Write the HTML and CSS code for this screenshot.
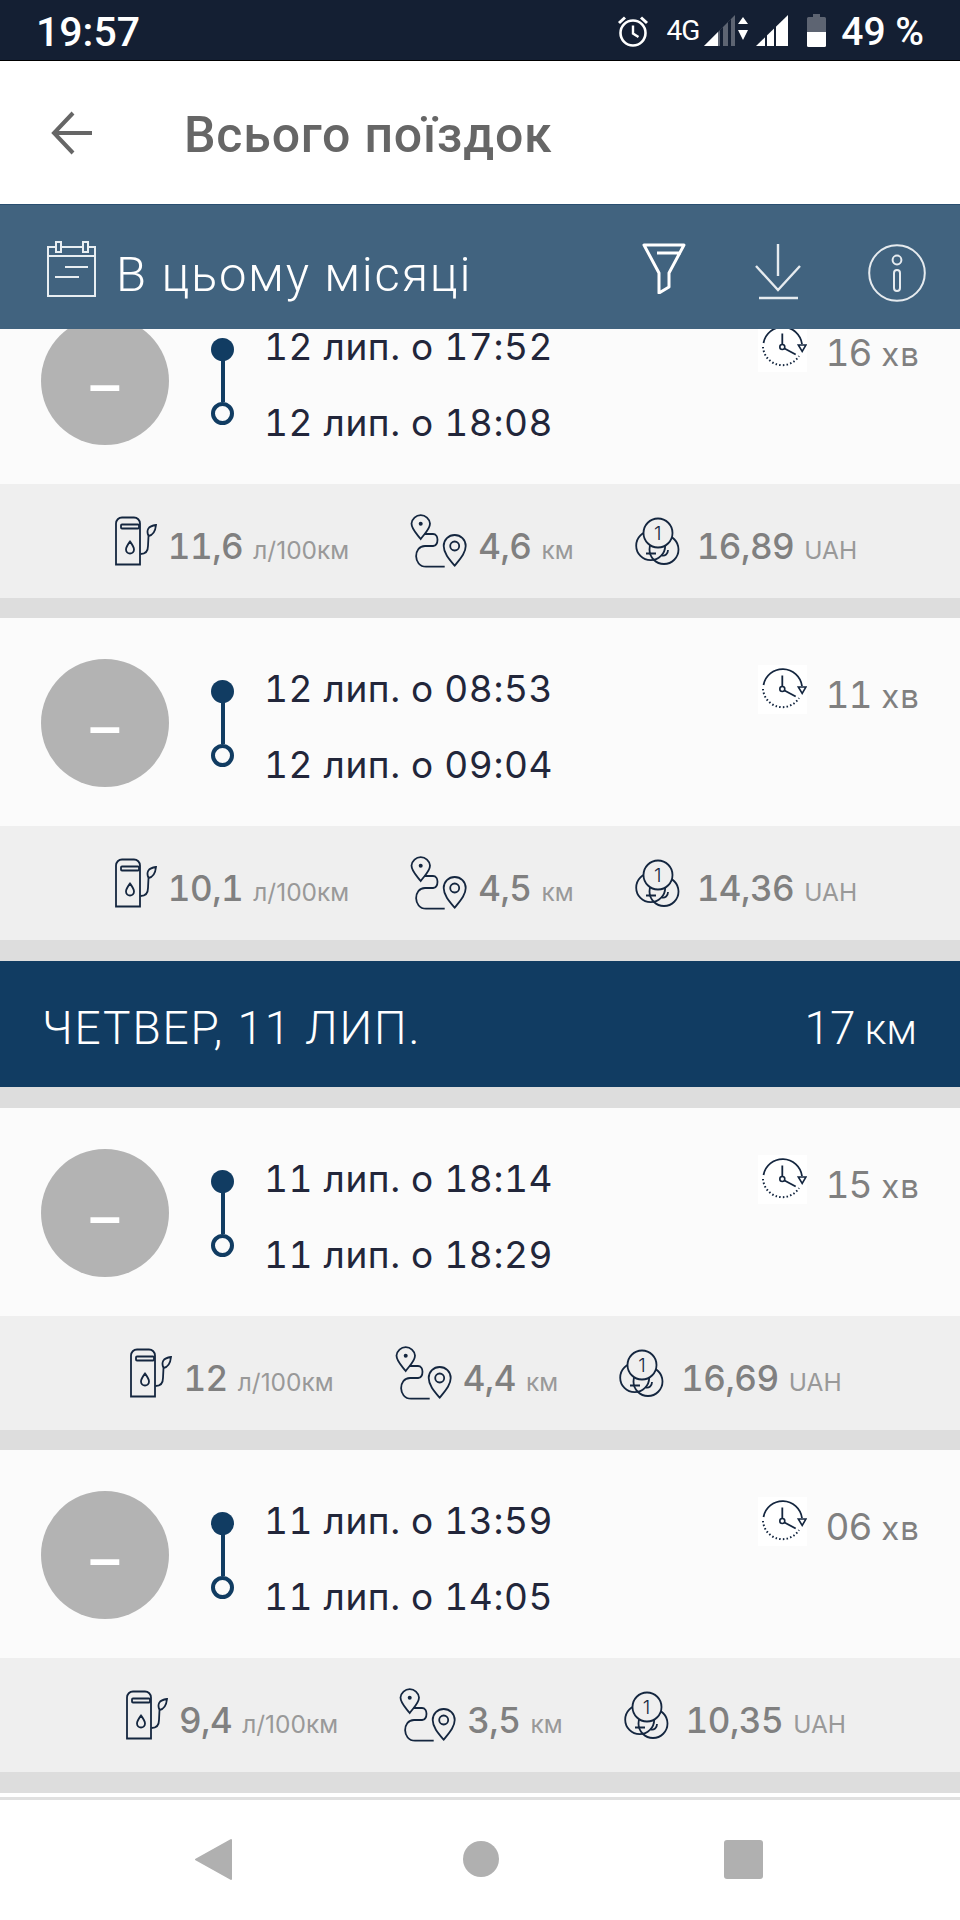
FILE: index.html
```html
<!DOCTYPE html>
<html>
<head>
    <meta charset="utf-8">
    <title>Всього поїздок</title>
    <link rel="stylesheet" href="styles.css">
</head>
<body>
    <svg class="defs" width="0" height="0">
        <symbol id="ico-clock" viewBox="0 0 49 49">
            <rect width="49" height="49" fill="#fff"/>
            <path d="M5.5 20A19.5 19.5 0 0 1 44 21" fill="none" stroke="#14263f" stroke-width="1.8"/>
            <path d="M40.3 22H48L44.2 28.5Z" fill="none" stroke="#14263f" stroke-width="1.6"/>
            <path d="M5 24A19.5 19.5 0 0 0 41 33" fill="none" stroke="#14263f" stroke-width="2" stroke-dasharray="1.5 2.2"/>
            <path d="M24.3 10.5V21.5M26.5 25.5L37.7 31.5" fill="none" stroke="#14263f" stroke-width="1.8"/>
            <circle cx="24.3" cy="24" r="2.5" fill="none" stroke="#14263f" stroke-width="1.6"/>
        </symbol>
        <symbol id="ico-pump" viewBox="0 0 42 50">
            <path d="M7 1.5H19A6 6 0 0 1 25 7.5V48.5H1V7.5A6 6 0 0 1 7 1.5Z" fill="none" stroke="#14263f" stroke-width="1.8"/>
            <rect x="6" y="8.5" width="18" height="4" rx="1" fill="none" stroke="#14263f" stroke-width="1.8"/>
            <path d="M15 25.5C12.5 29 11 31 11 33.5A4 4 0 0 0 19 33.5C19 31 17.5 29 15 25.5Z" fill="none" stroke="#14263f" stroke-width="1.8"/>
            <path d="M25.5 38C30 38 33 36 33 30L33.5 20C31 14 33 10 41 9C40.5 14 39 19 33.5 20" fill="none" stroke="#14263f" stroke-width="1.8"/>
        </symbol>
        <symbol id="ico-route" viewBox="0 0 57 56">
            <path d="M10.7 26C6 20 1.5 16 1.5 10.5A9.3 9.3 0 0 1 20 10.5C20 16 15 20 10.7 26Z" fill="none" stroke="#14263f" stroke-width="1.8"/>
            <circle cx="10.7" cy="10.7" r="2" fill="#14263f"/>
            <path d="M44.7 52.7C39 46 33.7 40 33.7 33A11 11 0 0 1 55.7 33C55.7 40 50 46 44.7 52.7Z" fill="none" stroke="#14263f" stroke-width="1.8"/>
            <circle cx="44.7" cy="33" r="4.5" fill="none" stroke="#14263f" stroke-width="1.8"/>
            <path d="M14.7 21H23C29 21 29 32 23 33H15C3 33 3 53.7 16 53.7H34.7" fill="none" stroke="#14263f" stroke-width="1.8"/>
        </symbol>
        <symbol id="ico-coin-back" viewBox="0 0 45 48">
            <circle cx="15.7" cy="28.7" r="14.5" fill="none" stroke="#14263f" stroke-width="1.8"/>
            <circle cx="29" cy="32.5" r="14.5" fill="none" stroke="#14263f" stroke-width="1.8"/>
            <path d="M11 36.5H21M27 38.5C30 39 33 37 33 33" fill="none" stroke="#14263f" stroke-width="1.8"/>
            <circle cx="23" cy="16" r="14.5" fill="#efefef" stroke="#14263f" stroke-width="1.8"/>
        </symbol>
    </svg>

    <div class="phone">
        <div class="status">
            <span class="clock">19:57</span>
            <div class="status-right">
                <svg class="alarm" width="32" height="32" viewBox="0 0 32 32">
                    <circle cx="16" cy="18" r="12.5" fill="none" stroke="#fff" stroke-width="2.6"/>
                    <path d="M16 10.5V18.5L21.5 22" fill="none" stroke="#fff" stroke-width="2.4"/>
                    <path d="M2 8L8 2.5M30 8L24 2.5" fill="none" stroke="#fff" stroke-width="3"/>
                </svg>
                <span class="net">4G</span>
                <svg class="signal" width="44" height="31" viewBox="0 0 44 31">
                    <path d="M0 31L31 0V31Z" fill="#5d6472"/>
                    <path d="M0 31L14 17V31Z" fill="#fff"/>
                    <path d="M16 31V15L19 12V31ZM24 31V7L27 4V31Z" fill="#141f33"/>
                    <path d="M39 4L44 11H34ZM39 27L34 17H44Z" fill="#fff" transform="translate(0 -2)"/>
                </svg>
                <svg class="signal2" width="32" height="31" viewBox="0 0 32 31">
                    <path d="M0 31L32 0V31Z" fill="#fff"/>
                    <path d="M9 31V20L11 18V31ZM18 31V12L20 10V31Z" fill="#141f33"/>
                </svg>
                <svg class="battery" width="19" height="33" viewBox="0 0 19 33">
                    <path d="M6 0H13V3H17.5A1.5 1.5 0 0 1 19 4.5V18H0V4.5A1.5 1.5 0 0 1 1.5 3H6Z" fill="#5d6472"/>
                    <path d="M0 18H19V31.5A1.5 1.5 0 0 1 17.5 33H1.5A1.5 1.5 0 0 1 0 31.5Z" fill="#fff"/>
                </svg>
                <span class="percent">49 %</span>
            </div>
        </div>

        <div class="topbar">
            <svg class="back" width="42" height="44" viewBox="0 0 42 44">
                <path d="M22 2L3 22L22 42M3 22H41" fill="none" stroke="#666" stroke-width="4"/>
            </svg>
            <span class="page-title">Всього поїздок</span>
        </div>

        <div class="period">
            <svg class="calendar" width="50" height="56" viewBox="0 0 50 56">
                <rect x="1" y="6" width="47" height="49" fill="none" stroke="#e8eef2" stroke-width="2"/>
                <path d="M1 15H48M18 26H41M8 36H32" fill="none" stroke="#e8eef2" stroke-width="2"/>
                <rect x="9" y="1" width="5" height="10" fill="#41637f" stroke="#e8eef2" stroke-width="2"/>
                <rect x="36" y="1" width="5" height="10" fill="#41637f" stroke="#e8eef2" stroke-width="2"/>
            </svg>
            <span class="period-label">В цьому місяці</span>
            <div class="period-tools">
                <svg width="44" height="51" viewBox="0 0 44 51">
                    <path d="M2 2H42L27 30V44L17 50V30ZM15 10H39" fill="none" stroke="#fff" stroke-width="3" stroke-linejoin="round"/>
                </svg>
                <svg class="tool-down" width="46" height="57" viewBox="0 0 46 57">
                    <path d="M23 1V33M1 23L23 47L45 23M4 55H43" fill="none" stroke="#e6ebef" stroke-width="2.4"/>
                </svg>
                <svg class="tool-info" width="58" height="58" viewBox="0 0 58 58">
                    <circle cx="29" cy="29" r="27.8" fill="none" stroke="#e6ebef" stroke-width="2"/>
                    <circle cx="29" cy="16" r="4.4" fill="none" stroke="#e6ebef" stroke-width="2"/>
                    <rect x="26" y="26" width="6" height="21" rx="3" fill="none" stroke="#e6ebef" stroke-width="2"/>
                </svg>
            </div>
        </div>

        <div class="trips">
            <div class="trips-inner">
                <div class="trip">
                    <div class="trip-main">
                        <div class="score">–</div>
                        <div class="route"><i class="dot"></i><i class="stem"></i><i class="ring"></i></div>
                        <div class="times"><div>12 лип. о 17:52</div><div>12 лип. о 18:08</div></div>
                        <div class="duration"><svg width="49" height="49"><use href="#ico-clock"/></svg><span>16 <small>хв</small></span></div>
                    </div>
                    <div class="stats">
                        <div class="stat"><svg class="pump" width="42" height="50"><use href="#ico-pump"/></svg><b>11,6</b><small>л/100км</small></div>
                        <div class="stat"><svg class="way" width="57" height="56"><use href="#ico-route"/></svg><b>4,6</b><small>км</small></div>
                        <div class="stat"><div class="coins"><svg width="45" height="48"><use href="#ico-coin-back"/></svg><span class="coin-num">1</span></div><b>16,89</b><small>UAH</small></div>
                    </div>
                </div>

                <div class="trip">
                    <div class="trip-main">
                        <div class="score">–</div>
                        <div class="route"><i class="dot"></i><i class="stem"></i><i class="ring"></i></div>
                        <div class="times"><div>12 лип. о 08:53</div><div>12 лип. о 09:04</div></div>
                        <div class="duration"><svg width="49" height="49"><use href="#ico-clock"/></svg><span>11 <small>хв</small></span></div>
                    </div>
                    <div class="stats">
                        <div class="stat"><svg class="pump" width="42" height="50"><use href="#ico-pump"/></svg><b>10,1</b><small>л/100км</small></div>
                        <div class="stat"><svg class="way" width="57" height="56"><use href="#ico-route"/></svg><b>4,5</b><small>км</small></div>
                        <div class="stat"><div class="coins"><svg width="45" height="48"><use href="#ico-coin-back"/></svg><span class="coin-num">1</span></div><b>14,36</b><small>UAH</small></div>
                    </div>
                </div>

                <div class="day">
                    <span class="day-name">ЧЕТВЕР, 11 ЛИП.</span>
                    <span class="day-dist">17<small>км</small></span>
                </div>

                <div class="trip">
                    <div class="trip-main">
                        <div class="score">–</div>
                        <div class="route"><i class="dot"></i><i class="stem"></i><i class="ring"></i></div>
                        <div class="times"><div>11 лип. о 18:14</div><div>11 лип. о 18:29</div></div>
                        <div class="duration"><svg width="49" height="49"><use href="#ico-clock"/></svg><span>15 <small>хв</small></span></div>
                    </div>
                    <div class="stats">
                        <div class="stat"><svg class="pump" width="42" height="50"><use href="#ico-pump"/></svg><b>12</b><small>л/100км</small></div>
                        <div class="stat"><svg class="way" width="57" height="56"><use href="#ico-route"/></svg><b>4,4</b><small>км</small></div>
                        <div class="stat"><div class="coins"><svg width="45" height="48"><use href="#ico-coin-back"/></svg><span class="coin-num">1</span></div><b>16,69</b><small>UAH</small></div>
                    </div>
                </div>

                <div class="trip">
                    <div class="trip-main">
                        <div class="score">–</div>
                        <div class="route"><i class="dot"></i><i class="stem"></i><i class="ring"></i></div>
                        <div class="times"><div>11 лип. о 13:59</div><div>11 лип. о 14:05</div></div>
                        <div class="duration"><svg width="49" height="49"><use href="#ico-clock"/></svg><span>06 <small>хв</small></span></div>
                    </div>
                    <div class="stats">
                        <div class="stat"><svg class="pump" width="42" height="50"><use href="#ico-pump"/></svg><b>9,4</b><small>л/100км</small></div>
                        <div class="stat"><svg class="way" width="57" height="56"><use href="#ico-route"/></svg><b>3,5</b><small>км</small></div>
                        <div class="stat"><div class="coins"><svg width="45" height="48"><use href="#ico-coin-back"/></svg><span class="coin-num">1</span></div><b>10,35</b><small>UAH</small></div>
                    </div>
                </div>
            </div>
        </div>

        <div class="nav">
            <svg width="37" height="43" viewBox="0 0 37 43">
                <path d="M36 2V41L1 21.5Z" fill="#b0b0b0" stroke="#b0b0b0" stroke-width="2" stroke-linejoin="round"/>
            </svg>
            <i class="nav-home"></i>
            <i class="nav-recent"></i>
        </div>
    </div>
</body>
</html>
```

FILE: styles.css
```css
body {
    margin: 0;
    background-color: #fff;
    font-family: Inter, sans-serif;
}

.defs {
    position: absolute;
}

.phone {
    width: 960px;
    height: 1920px;
    display: flex;
    flex-direction: column;
    overflow: hidden;
}

/* status bar */
.status {
    height: 60px;
    flex: none;
    display: flex;
    align-items: center;
    justify-content: space-between;
    padding: 0 36px;
    background-color: #141f33;
    border-bottom: 1px solid #000;
    color: #fff;
    font-family: Roboto, sans-serif;
    font-weight: 500;
}

.clock {
    margin-top: 3px;
    font-size: 41px;
}

.status-right {
    display: flex;
    align-items: center;
    margin-top: 1px;
}

.net {
    margin-left: 17px;
    font-size: 28px;
    font-weight: 400;
    letter-spacing: -1px;
}

.signal {
    margin-left: 5px;
}

.signal2 {
    margin-left: 8px;
}

.battery {
    margin-left: 19px;
}

.percent {
    margin-left: 15px;
    margin-top: 2px;
    font-size: 39px;
}

/* title bar */
.topbar {
    height: 143px;
    flex: none;
    display: flex;
    align-items: center;
    border-bottom: 1px solid #2a4f70;
    background-color: #fff;
}

.back {
    margin-left: 51px;
}

.page-title {
    margin-left: 91px;
    margin-top: 5px;
    font-family: Roboto, sans-serif;
    font-size: 50px;
    font-weight: 500;
    letter-spacing: 0.8px;
    color: #666;
}

/* period band */
.period {
    height: 124px;
    flex: none;
    display: flex;
    align-items: center;
    padding-left: 47px;
    background-color: #41637f;
    color: #fff;
}

.calendar {
    margin-top: 4px;
}

.period-label {
    margin-left: 19px;
    margin-top: 14px;
    font-family: Roboto, sans-serif;
    font-size: 49px;
    font-weight: 300;
    letter-spacing: 1.7px;
}

.period-tools {
    margin-left: auto;
    display: flex;
    align-items: center;
    margin-right: 34px;
    margin-top: 2px;
}

.tool-down {
    margin-left: 69px;
    margin-top: 6px;
}

.tool-info {
    margin-left: 67px;
    margin-top: 10px;
}

/* trip list, scrolled a little way down */
.trips {
    flex: 1;
    min-height: 0;
    overflow: hidden;
    background-color: #ddd;
}

.trips-inner {
    margin-top: -53px;
}

.trip {
    margin-bottom: 20px;
}

.trip-main {
    height: 176px;
    display: flex;
    align-items: flex-start;
    padding: 32px 40px 0 41px;
    background-color: #fbfbfb;
}

.score {
    width: 128px;
    height: 128px;
    margin-top: 9px;
    flex: none;
    border-radius: 50%;
    background-color: #b3b3b3;
    color: #fff;
    text-align: center;
    font-family: "Liberation Sans", sans-serif;
    font-size: 58px;
    font-weight: 700;
    line-height: 134px;
}

.route {
    width: 23px;
    margin: 30px 0 0 42px;
    flex: none;
    display: flex;
    flex-direction: column;
    align-items: center;
}

.dot {
    width: 23px;
    height: 23px;
    border-radius: 50%;
    background-color: #113c62;
}

.stem {
    width: 4px;
    height: 41px;
    background-color: #113c62;
}

.ring {
    width: 15px;
    height: 15px;
    border: 4px solid #113c62;
    border-radius: 50%;
}

.times {
    margin-left: 30px;
    margin-top: 1px;
    font-size: 37px;
    line-height: 76px;
    letter-spacing: 0.55px;
    font-variant-numeric: tabular-nums;
    color: #22263a;
}

.duration {
    margin-left: auto;
    margin-top: 12px;
    display: flex;
    align-items: center;
    color: #808080;
    font-size: 37px;
    letter-spacing: -1px;
    word-spacing: -2px;
    font-variant-numeric: tabular-nums;
}

.duration span {
    margin-left: 18px;
    margin-top: 10px;
}

.duration small {
    font-size: 33px;
    letter-spacing: 1px;
    margin-left: 3px;
}

.stats {
    height: 114px;
    display: flex;
    align-items: center;
    justify-content: center;
    gap: 61px;
    padding-left: 12px;
    background-color: #efefef;
    color: #808080;
}

.stat {
    height: 56px;
    display: flex;
    align-items: baseline;
}

.stat > svg,
.coins {
    align-self: center;
    margin-right: 11px;
}

.coins {
    position: relative;
    width: 45px;
    height: 48px;
    margin-right: 17px;
}

.coin-num {
    position: absolute;
    left: 16px;
    top: 5px;
    width: 14px;
    text-align: center;
    font-size: 19px;
    font-weight: 300;
    line-height: 23px;
    color: #14263f;
}

.stat b {
    margin-top: 12px;
    font-weight: 500;
    font-size: 35px;
    letter-spacing: -0.5px;
    font-variant-numeric: tabular-nums;
}

.stat small {
    margin-left: 10px;
    font-size: 24.5px;
    color: #999;
}

/* day header */
.day {
    height: 126px;
    margin-bottom: 21px;
    display: flex;
    align-items: center;
    justify-content: space-between;
    padding: 0 43px 0 42px;
    border-top: 1px solid #ddd;
    background-color: #113c62;
    color: #fff;
    font-family: Roboto, sans-serif;
    font-size: 46px;
    font-weight: 300;
}

.day-name {
    margin-top: 8px;
    letter-spacing: 1.9px;
}

.day-dist {
    margin-top: 8px;
}

.day-dist small {
    margin-left: 9px;
    font-size: 42px;
}

/* android navigation */
.nav {
    height: 123px;
    flex: none;
    display: flex;
    align-items: center;
    justify-content: space-between;
    box-sizing: border-box;
    padding: 0 197px 2px 195px;
    margin-top: 4px;
    border-top: 3px solid #e0e0e0;
    background-color: #fff;
}

.nav-home {
    width: 36px;
    height: 36px;
    margin-left: 5px;
    border-radius: 50%;
    background-color: #b0b0b0;
}

.nav-recent {
    width: 39px;
    height: 39px;
    border-radius: 3px;
    background-color: #b0b0b0;
}
```
